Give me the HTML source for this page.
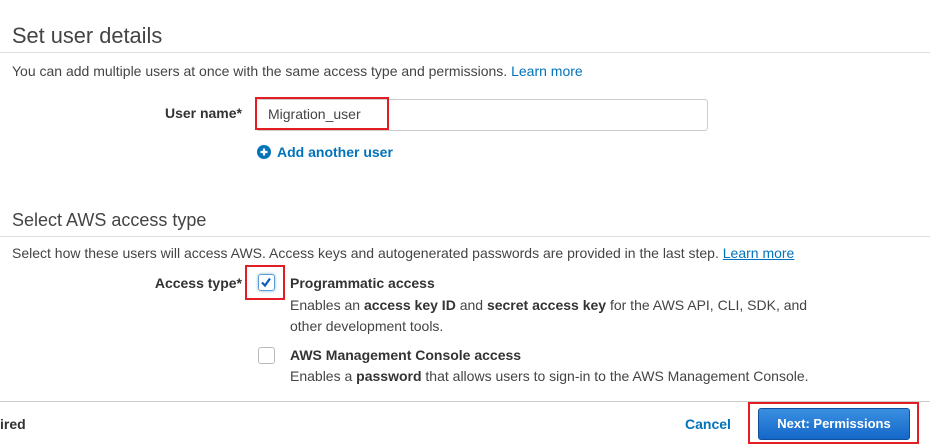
<!DOCTYPE html>
<html><head><meta charset="utf-8"><style>
body{margin:0;width:930px;height:445px;background:#fff;font-family:"Liberation Sans",Arial,sans-serif;color:#444;position:relative;overflow:hidden}
.a{position:absolute;white-space:nowrap}
.h{font-size:21.8px;color:#444}
.t{font-size:14px;color:#444}
.l{color:#0073bb}
.line{position:absolute;left:0;width:930px;height:1px;background:#ddd}
.lab{position:absolute;right:688px;font-size:14px;font-weight:bold;color:#333;white-space:nowrap}
b{color:#333}
</style></head><body>
<div class="a h" style="left:12px;top:23px">Set user details</div>
<div class="line" style="top:52px"></div>
<div class="a t" style="left:12px;top:63px">You can add multiple users at once with the same access type and permissions. <span class="l">Learn more</span></div>
<div class="lab" style="top:105px">User name*</div>
<div class="a" style="left:256px;top:99px;width:450px;height:30px;border:1px solid #ccc;border-radius:3px"></div>
<div class="a" style="left:255px;top:97px;width:130px;height:29px;border:2px solid #e41c24"></div>
<div class="a" style="left:268px;top:106px;font-size:14px;color:#444">Migration_user</div>
<svg class="a" style="left:257px;top:145px" width="14" height="14" viewBox="0 0 14 14"><circle cx="7" cy="7" r="7" fill="#0073bb"/><path d="M7 3.5v7M3.5 7h7" stroke="#fff" stroke-width="2.2"/></svg>
<div class="a" style="left:277px;top:144px;font-size:14px;font-weight:bold;color:#0073bb">Add another user</div>
<div class="a" style="left:12px;top:210px;font-size:18px;color:#444">Select AWS access type</div>
<div class="line" style="top:236px"></div>
<div class="a t" style="left:12px;top:245px">Select how these users will access AWS. Access keys and autogenerated passwords are provided in the last step. <span class="l" style="text-decoration:underline">Learn more</span></div>
<div class="lab" style="top:275px">Access type*</div>
<div class="a" style="left:258px;top:274px;width:15px;height:15px;border:1px solid #5b9bd5;border-radius:3px;box-shadow:0 0 3px #8bc"></div>
<svg class="a" style="left:260px;top:276px" width="12" height="12" viewBox="0 0 12 12"><path d="M2 6.5l3 3 5-7" stroke="#0a5db8" stroke-width="2.2" fill="none"/></svg>
<div class="a" style="left:245px;top:265px;width:36px;height:31px;border:2px solid #e41c24"></div>
<div class="a t" style="left:290px;top:275px;font-weight:bold;color:#333">Programmatic access</div>
<div class="a t" style="left:290px;top:295px;line-height:21px">Enables an <b>access key ID</b> and <b>secret access key</b> for the AWS API, CLI, SDK, and<br>other development tools.</div>
<div class="a" style="left:258px;top:347px;width:15px;height:15px;border:1px solid #bbb;border-radius:3px"></div>
<div class="a t" style="left:290px;top:347px;font-weight:bold;color:#333">AWS Management Console access</div>
<div class="a t" style="left:290px;top:368px">Enables a <b>password</b> that allows users to sign-in to the AWS Management Console.</div>
<div class="line" style="top:401px;background:#ccc"></div>
<div class="a t" style="left:0;top:416px;font-weight:bold;color:#333">ired</div>
<div class="a t" style="left:685px;top:416px;font-weight:bold;color:#0073bb">Cancel</div>
<div class="a" style="left:758px;top:408px;width:150px;height:30px;background:linear-gradient(#3b8fe0,#1467c8);border:1px solid #10509e;border-radius:3px;color:#fff;font-size:13px;font-weight:bold;text-align:center;line-height:30px">Next: Permissions</div>
<div class="a" style="left:748px;top:402px;width:167px;height:38px;border:2px solid #e41c24"></div>
</body></html>
